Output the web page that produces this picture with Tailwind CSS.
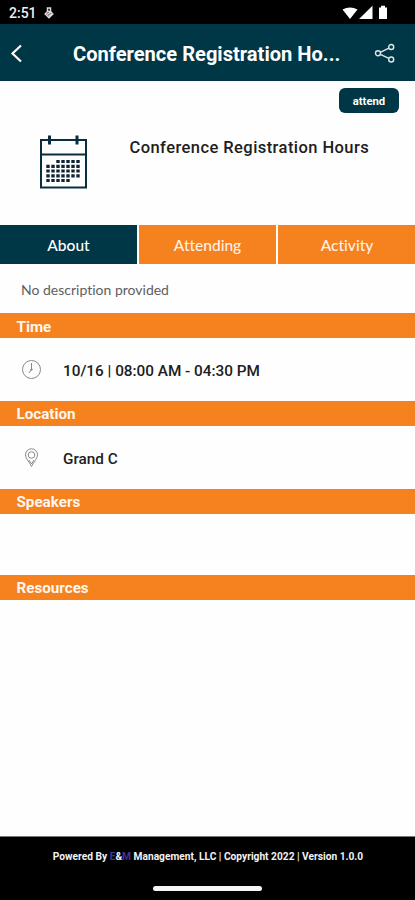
<!DOCTYPE html>
<html lang="en">
<head>
<meta charset="utf-8">
<title>Conference Registration Hours</title>
<script src="https://cdn.jsdelivr.net/npm/@tailwindcss/browser@4"></script>
</head>
<body class="bg-[#fefefe]">
<div class="flex h-[900px] w-[415px] flex-col overflow-hidden bg-[#fefefe] font-[Roboto,sans-serif] whitespace-nowrap [font-variant-ligatures:none]">
  <div class="flex h-6 shrink-0 items-center bg-black pl-[9px] pr-[27px] text-white">
    <span class="w-[35px] pt-[2px] text-[14px] leading-5 font-medium text-[#eeeeee]">2:51</span>
    <svg class="mt-[1px] h-3 w-[10px]" viewBox="0 0 10 12" fill="none" stroke="#dcdcdc" stroke-width="1.500"><path d="M3.500 1h3v3.500h-3zM3.500 4.500 1.200 7 5 10.800 8.800 7 6.500 4.500M3 7.500l3.500-2M4.500 9 7.500 7"/></svg>
    <svg class="mt-[2px] ml-auto h-4 w-[46px]" viewBox="0 0 46 16" fill="#fff"><path d="M.5 4.500Q8 .5 15.500 4.500L8 14zM17 14 30.500.8V14zM37 2.500h2V.8h4v1.700h2V14h-8z"/></svg>
  </div>
  <header class="flex h-[57px] shrink-0 items-center bg-[#003747] text-white">
    <svg class="ml-[10px] h-5 w-3" viewBox="0 0 12 20" fill="none" stroke="#fff" stroke-width="2.200"><path d="M11 2.500 2.500 10.500 11 18.500"/></svg>
    <h1 class="ml-[51px] w-[270px] pt-[4px] text-[20.1px] font-bold">Conference Registration Ho...</h1>
    <svg class="ml-[31px] h-5 w-[22px]" viewBox="0 0 22 20" fill="none" stroke="#dde6e8" stroke-width="1.400"><circle cx="4" cy="10.300" r="2.500"/><circle cx="17.200" cy="4" r="2.500"/><circle cx="17.200" cy="16.500" r="2.500"/><path d="m6.300 9.300 8.600-4.200M6.300 11.400l8.600 4"/></svg>
  </header>
  <section class="h-36 shrink-0">
    <div class="flex justify-end pt-[7px] pr-4">
      <button class="h-[25px] w-[60px] rounded-[6px] bg-[#003747] pt-[3px] text-[11.300px] font-bold text-white">attend</button>
    </div>
    <div class="flex pt-[21px] pl-[39px]">
      <svg class="h-[55px] w-[48px]" viewBox="0 0 48 55" fill="none" stroke="#082c40" stroke-width="2"><path d="M2 6h45v47.500h-45zM2 20.500h45"/><path d="M10.500 1.500v9M38 1.500v9" stroke-width="3"/><g stroke="#102436" stroke-width="3.200" stroke-dasharray="3.400 1.600"><path d="M17.300 27.500h23.400M7.300 32.300h33.400M7.300 37h33.400M7.300 41.800h33.400M7.300 46.500h23.400"/></g></svg>
      <h2 class="ml-[42.500px] pt-[2px] text-[16.5px] leading-6 font-medium tracking-[0.430px] text-[#202020]">Conference Registration Hours</h2>
    </div>
  </section>
  <nav class="grid h-[39px] shrink-0 grid-cols-[137px_137px_137px] gap-[2px] font-[Lato,sans-serif] text-[15.500px] font-medium">
    <div class="flex items-center justify-center bg-[#003747] pt-[2px] text-white">About</div>
    <div class="flex items-center justify-center bg-[#f5811f] pt-[2px] text-[#fff0e4]">Attending</div>
    <div class="flex w-[138px] items-center justify-center bg-[#f5811f] pt-[2px] text-[#fff0e4]">Activity</div>
  </nav>
  <p class="flex h-[49px] shrink-0 items-center pt-[2px] pl-[21px] font-[Lato,sans-serif] text-[14px] text-[#606060]">No description provided</p>
  <h3 class="flex h-[25px] shrink-0 items-center bg-[#f5811f] pt-[3px] pl-[16.500px] text-[15.200px] font-bold text-[#fff7f0]">Time</h3>
  <div class="flex h-[63px] shrink-0 items-center pl-[22px] text-[15.300px] font-medium text-[#202020]">
    <svg class="h-5 w-5" viewBox="0 0 20 20" fill="none" stroke="#888" stroke-width="1"><circle cx="9.500" cy="9.500" r="9"/><path d="M9.500 3V9.500l-2.500 3.500"/><circle cx="9.500" cy="9.500" r=".8"/></svg>
    <span class="ml-[21px] pt-[3px]">10/16 | 08:00 AM - 04:30 PM</span>
  </div>
  <h3 class="flex h-[25px] shrink-0 items-center bg-[#f5811f] pt-[2px] pl-[16.500px] text-[15.200px] font-bold text-[#fff7f0]">Location</h3>
  <div class="flex h-[63px] shrink-0 items-center pl-[22px] text-[15.300px] font-medium text-[#202020]">
    <svg class="h-5 w-5" viewBox="0 0 20 20" fill="none" stroke="#888" stroke-width="1"><path d="M9.500 18.500C8 15 3.500 10.500 3.500 6.800a6 6 0 0 1 12 0c0 3.700-4.500 8.200-6 11.700z"/><circle cx="9.500" cy="7" r="3.300"/><path d="M7 12 9.500 16l2.500-4"/></svg>
    <span class="ml-[21px] pt-[3px]">Grand C</span>
  </div>
  <h3 class="flex h-[25px] shrink-0 items-center bg-[#f5811f] pt-[2px] pl-[16.500px] text-[15.200px] font-bold text-[#fff7f0]">Speakers</h3>
  <h3 class="mt-[61px] flex h-[25px] shrink-0 items-center bg-[#f5811f] pt-[2px] pl-[16.500px] text-[15.200px] font-bold text-[#fff7f0]">Resources</h3>
  <footer class="mt-auto flex h-16 shrink-0 flex-col items-center border-t border-[#777] bg-black">
    <p class="mt-[12px] ml-[1px] text-[10.200px] leading-4 font-bold text-[#f2f2f2]">Powered By <span class="text-[#40359a]">E</span>&amp;<span class="text-[#40359a]">M</span> Management, LLC | Copyright 2022 | Version 1.0.0</p>
    <div class="mt-[21px] h-[5px] w-[109px] rounded-full bg-[#f5f5f5]"></div>
  </footer>
</div>
</body>
</html>
